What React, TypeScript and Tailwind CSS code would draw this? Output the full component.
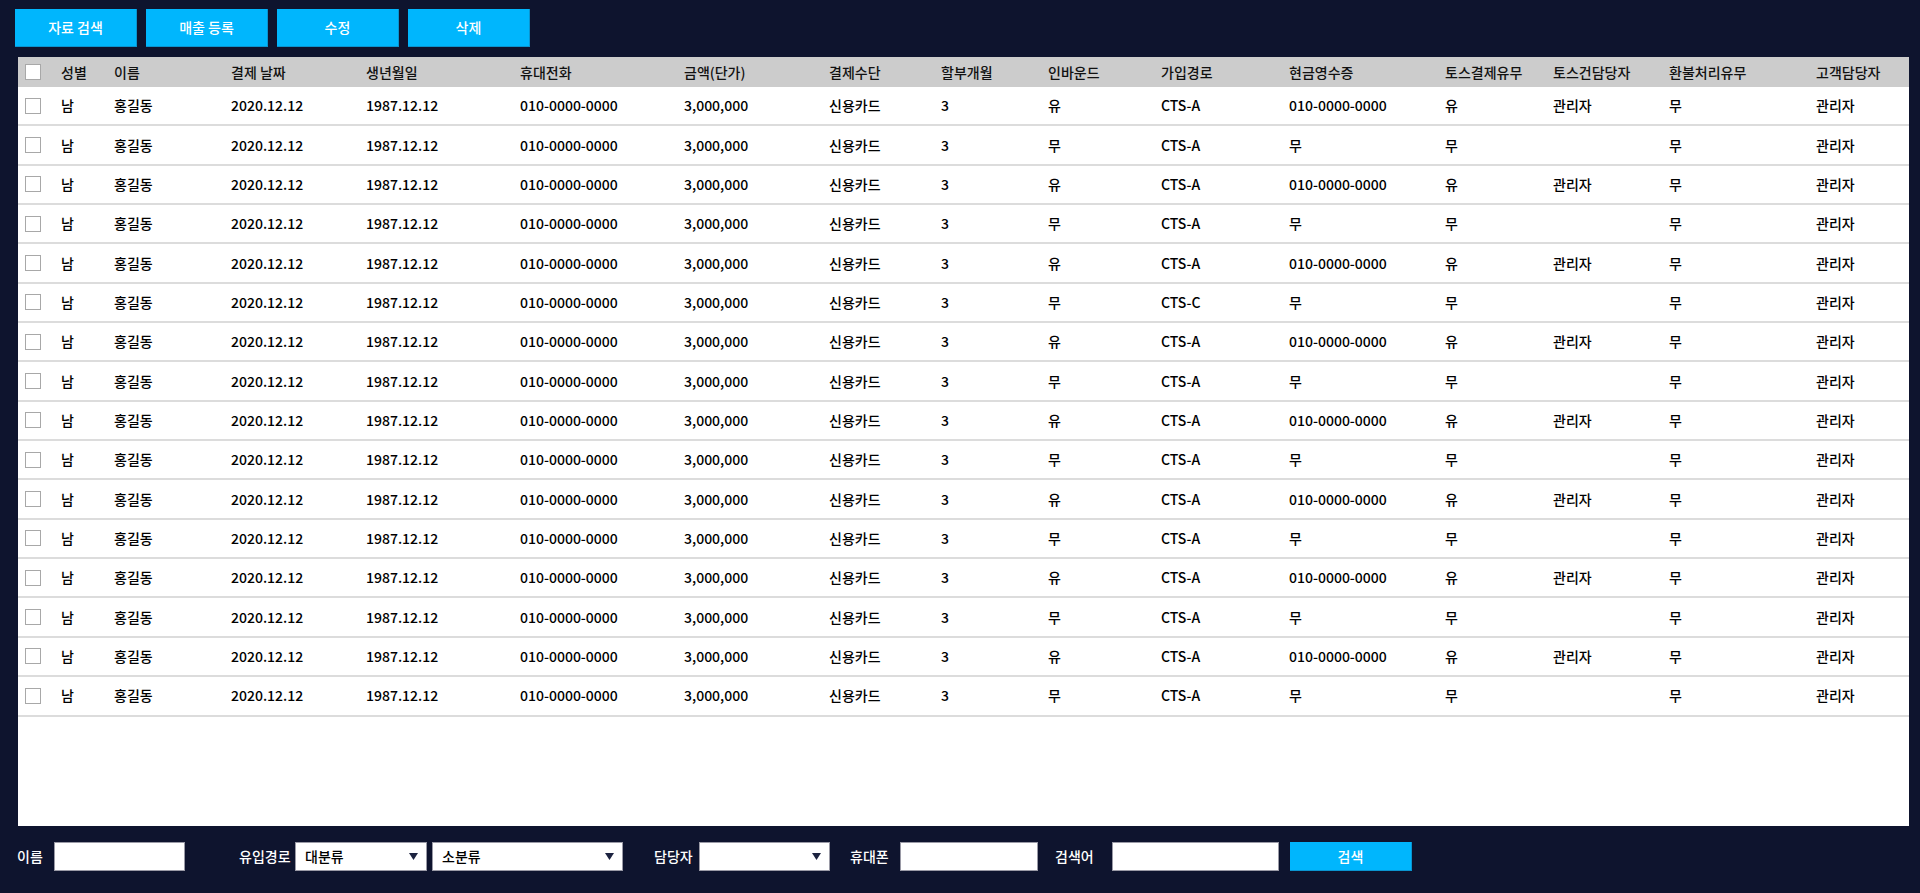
import React from "react";

const FONT = { fontFamily: '"Noto Sans CJK KR", "Noto Sans", sans-serif' };

const headers = [
  "성별",
  "이름",
  "결제 날짜",
  "생년월일",
  "휴대전화",
  "금액(단가)",
  "결제수단",
  "할부개월",
  "인바운드",
  "가입경로",
  "현금영수증",
  "토스결제유무",
  "토스건담당자",
  "환불처리유무",
  "고객담당자",
];

type Row = string[];

const rows: Row[] = Array.from({ length: 16 }, (_, i) => {
  const even = i % 2 === 0;
  return [
    "남",
    "홍길동",
    "2020.12.12",
    "1987.12.12",
    "010-0000-0000",
    "3,000,000",
    "신용카드",
    "3",
    even ? "유" : "무",
    i === 5 ? "CTS-C" : "CTS-A",
    even ? "010-0000-0000" : "무",
    even ? "유" : "무",
    even ? "관리자" : "",
    "무",
    "관리자",
  ];
});

const GRID =
  "grid grid-cols-[36px_53px_117px_135px_154px_164px_145px_112px_107px_113px_128px_156px_108px_116px_147px_1fr] items-center pl-[7px]";

function Checkbox() {
  return <div className="w-[16px] h-[16px] bg-white border border-[#a8a8a8]" />;
}

function TopButton({ label }: { label: string }) {
  return (
    <button className="w-[122px] h-[38px] bg-[#00b6fd] border-r border-b border-[#0a94cf] text-white text-[14px] font-medium flex items-center justify-center">
      {label}
    </button>
  );
}

function Arrow() {
  return (
    <svg width="9" height="7" viewBox="0 0 9 7" className="shrink-0">
      <path d="M0 0 L9 0 L4.5 7 Z" fill="#1c2340" />
    </svg>
  );
}

function Select({ label, width }: { label: string; width: string }) {
  return (
    <div
      className={`${width} h-[29px] bg-white border border-[#9a9aa6] flex items-center justify-between pl-[9px] pr-[8px] text-[14px] font-medium text-black`}
    >
      <span>{label}</span>
      <Arrow />
    </div>
  );
}

function Label({ children, className }: { children: React.ReactNode; className: string }) {
  return (
    <span className={`text-white text-[14px] font-medium whitespace-nowrap shrink-0 ${className}`}>
      {children}
    </span>
  );
}

function Input({ className }: { className: string }) {
  return <div className={`h-[29px] bg-white border border-[#9a9aa6] shrink-0 ${className}`} />;
}

export default function App() {
  return (
    <div className="w-[1920px] h-[893px] bg-[#0e142e] overflow-hidden flex flex-col" style={FONT}>
      <div className="flex gap-[9px] pl-[15px] pt-[9px]">
        <TopButton label="자료 검색" />
        <TopButton label="매출 등록" />
        <TopButton label="수정" />
        <TopButton label="삭제" />
      </div>

      <div className="ml-[18px] mt-[10px] w-[1891px] h-[769px] bg-white flex flex-col">
        <div className={`${GRID} h-[30px] shrink-0 bg-[#cccccc] text-[14px] font-medium text-[#111]`}>
          <Checkbox />
          {headers.map((h) => (
            <div key={h} className="whitespace-nowrap">
              {h}
            </div>
          ))}
        </div>
        {rows.map((r, i) => (
          <div
            key={i}
            className={`${GRID} h-[39.35px] shrink-0 border-b-2 border-[#dcdcdc] text-[14px] font-medium text-black`}
          >
            <Checkbox />
            {r.map((c, j) => (
              <div key={j} className="whitespace-nowrap">
                {c}
              </div>
            ))}
          </div>
        ))}
      </div>

      <div className="flex items-center mt-[16px] pl-[17px]">
        <Label className="w-[37px]">이름</Label>
        <Input className="w-[131px]" />
        <Label className="ml-[54px] w-[56px]">유입경로</Label>
        <Select label="대분류" width="w-[132px]" />
        <div className="ml-[5px]">
          <Select label="소분류" width="w-[191px]" />
        </div>
        <Label className="ml-[31px] w-[45px]">담당자</Label>
        <Select label="" width="w-[131px]" />
        <Label className="ml-[20px] w-[50px]">휴대폰</Label>
        <Input className="w-[138px]" />
        <Label className="ml-[17px] w-[57px]">검색어</Label>
        <Input className="w-[167px]" />
        <button className="ml-[11px] w-[122px] h-[29px] bg-[#00b6fd] border-r border-b border-[#0a94cf] text-white text-[14px] font-medium flex items-center justify-center">
          검색
        </button>
      </div>
    </div>
  );
}
